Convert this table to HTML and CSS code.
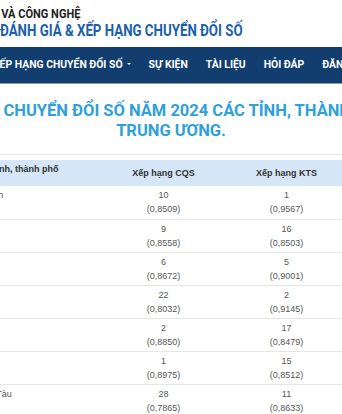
FILE: index.html
```html
<!DOCTYPE html>
<html lang="vi">
<head>
<meta charset="utf-8">
<title>Xếp hạng chuyển đổi số</title>
<link rel="stylesheet" href="styles.css">
</head>
<body>
<header class="brand">
  <div class="brand-line1"><span class="cond">BỘ KHOA HỌC VÀ CÔNG NGHỆ</span></div>
  <div class="brand-line2"><span class="cond cond-more">ĐÁNH GIÁ &amp; XẾP HẠNG CHUYỂN ĐỔI SỐ</span></div>
</header>
<nav class="nav">
  <ul class="nav-list">
    <li class="nav-item">XẾP HẠNG CHUYỂN ĐỔI SỐ <span class="caret"></span></li>
    <li class="nav-item">SỰ KIỆN</li>
    <li class="nav-item">TÀI LIỆU</li>
    <li class="nav-item">HỎI ĐÁP</li>
    <li class="nav-item">ĐĂNG NHẬP</li>
  </ul>
</nav>
<h1 class="title"><span class="title-line title-first">XẾP HẠNG MỨC ĐỘ CHUYỂN ĐỔI SỐ NĂM 2024 CÁC TỈNH, THÀNH PHỐ TRỰC THUỘC</span> <span class="title-line">TRUNG ƯƠNG.</span></h1>
<div class="table-wrap">
  <table class="rank">
    <colgroup><col class="c-name"><col class="c-num"><col class="c-num"></colgroup>
    <thead>
      <tr><th class="th-name">Tỉnh, thành phố</th><th class="th-num">Xếp hạng CQS</th><th class="th-num">Xếp hạng KTS</th></tr>
    </thead>
    <tbody>
      <tr><td class="name">TP. Hồ Chí Minh</td><td class="num">10<br>(0,8509)</td><td class="num">1<br>(0,9567)</td></tr>
      <tr><td class="name">Hà Nội</td><td class="num">9<br>(0,8558)</td><td class="num">16<br>(0,8503)</td></tr>
      <tr><td class="name">Hải Phòng</td><td class="num">6<br>(0,8672)</td><td class="num">5<br>(0,9001)</td></tr>
      <tr><td class="name">Bình Dương</td><td class="num">22<br>(0,8032)</td><td class="num">2<br>(0,9145)</td></tr>
      <tr><td class="name">Quảng Ninh</td><td class="num">2<br>(0,8850)</td><td class="num">17<br>(0,8479)</td></tr>
      <tr><td class="name">Đà Nẵng</td><td class="num">1<br>(0,8975)</td><td class="num">15<br>(0,8512)</td></tr>
      <tr><td class="name">Bà Rịa - Vũng Tàu</td><td class="num">28<br>(0,7865)</td><td class="num">11<br>(0,8633)</td></tr>
    </tbody>
  </table>
</div>
</body>
</html>
```
FILE: styles.css
```css
html, body {
  margin: 0;
  padding: 0;
  background: #ffffff;
}
body {
  width: 342px;
  height: 414px;
  overflow: hidden;
  font-family: "Liberation Sans", Arial, sans-serif;
}

.brand {
  height: 47px;
  box-sizing: border-box;
  padding-top: 7px;
  font-family: Roboto, "Liberation Sans", sans-serif;
  font-weight: 700;
  white-space: nowrap;
}
.cond {
  display: inline-block;
  transform: scaleX(0.92);
  transform-origin: left center;
}
.cond-more {
  transform: scaleX(0.83);
}
.brand-line1 {
  font-size: 12px;
  line-height: 14px;
  color: #222222;
  margin-left: -74px;
}
.brand-line2 {
  font-size: 16px;
  line-height: 18px;
  padding-top: 1px;
  color: #1b5fae;
}

.nav {
  height: 36px;
  background: #113e6f;
  border-bottom: 1px solid #8a9cb0;
  overflow: hidden;
}
.nav-list {
  list-style: none;
  margin: 0 0 0 -7px;
  padding: 0 0 2px 0;
  height: 36px;
  box-sizing: border-box;
  display: flex;
  align-items: center;
  gap: 18px;
  white-space: nowrap;
}
.nav-item {
  font-family: Roboto, "Liberation Sans", sans-serif;
  font-weight: 700;
  font-size: 10.4px;
  color: #ffffff;
  display: flex;
  align-items: center;
}
.caret {
  display: inline-block;
  margin-left: 4px;
  width: 0;
  height: 0;
  border-left: 2.5px solid transparent;
  border-right: 2.5px solid transparent;
  border-top: 2.5px solid #ffffff;
}

.title {
  margin: 17px 0 0 -329px;
  width: 1000px;
  text-align: center;
  font-family: Roboto, "Liberation Sans", sans-serif;
  font-weight: 700;
  font-size: 16.5px;
  line-height: 20px;
  color: #2ea0dc;
  white-space: nowrap;
}
.title-line {
  display: block;
}
.title-first {
  padding-left: 4px;
}

.table-wrap {
  margin-top: 13px;
  border-top: 1px solid #e4e4e4;
  padding-top: 5px;
}
.rank {
  margin-left: -78px;
  width: 426px;
  table-layout: fixed;
  border-collapse: collapse;
  font-size: 9px;
}
.c-name { width: 180px; }
.c-num { width: 123px; }

.rank thead tr {
  background: #d4e6f7;
  height: 26px;
}
.rank th {
  font-weight: 700;
  color: #333333;
  vertical-align: top;
  line-height: 11px;
  white-space: nowrap;
}
.th-name {
  text-align: left;
  padding: 4px 0 0 69px;
}
.th-num {
  text-align: center;
  padding: 8px 0 0 0;
}

.rank tbody tr {
  height: 33px;
  border-bottom: 1px solid #e6e6e6;
}
.rank td {
  line-height: 14px;
  color: #555555;
  padding: 2px 0 2px 0;
}
.name {
  text-align: left;
  vertical-align: top;
  padding-left: 16px !important;
  white-space: nowrap;
}
.num {
  text-align: center;
  vertical-align: middle;
}
```
